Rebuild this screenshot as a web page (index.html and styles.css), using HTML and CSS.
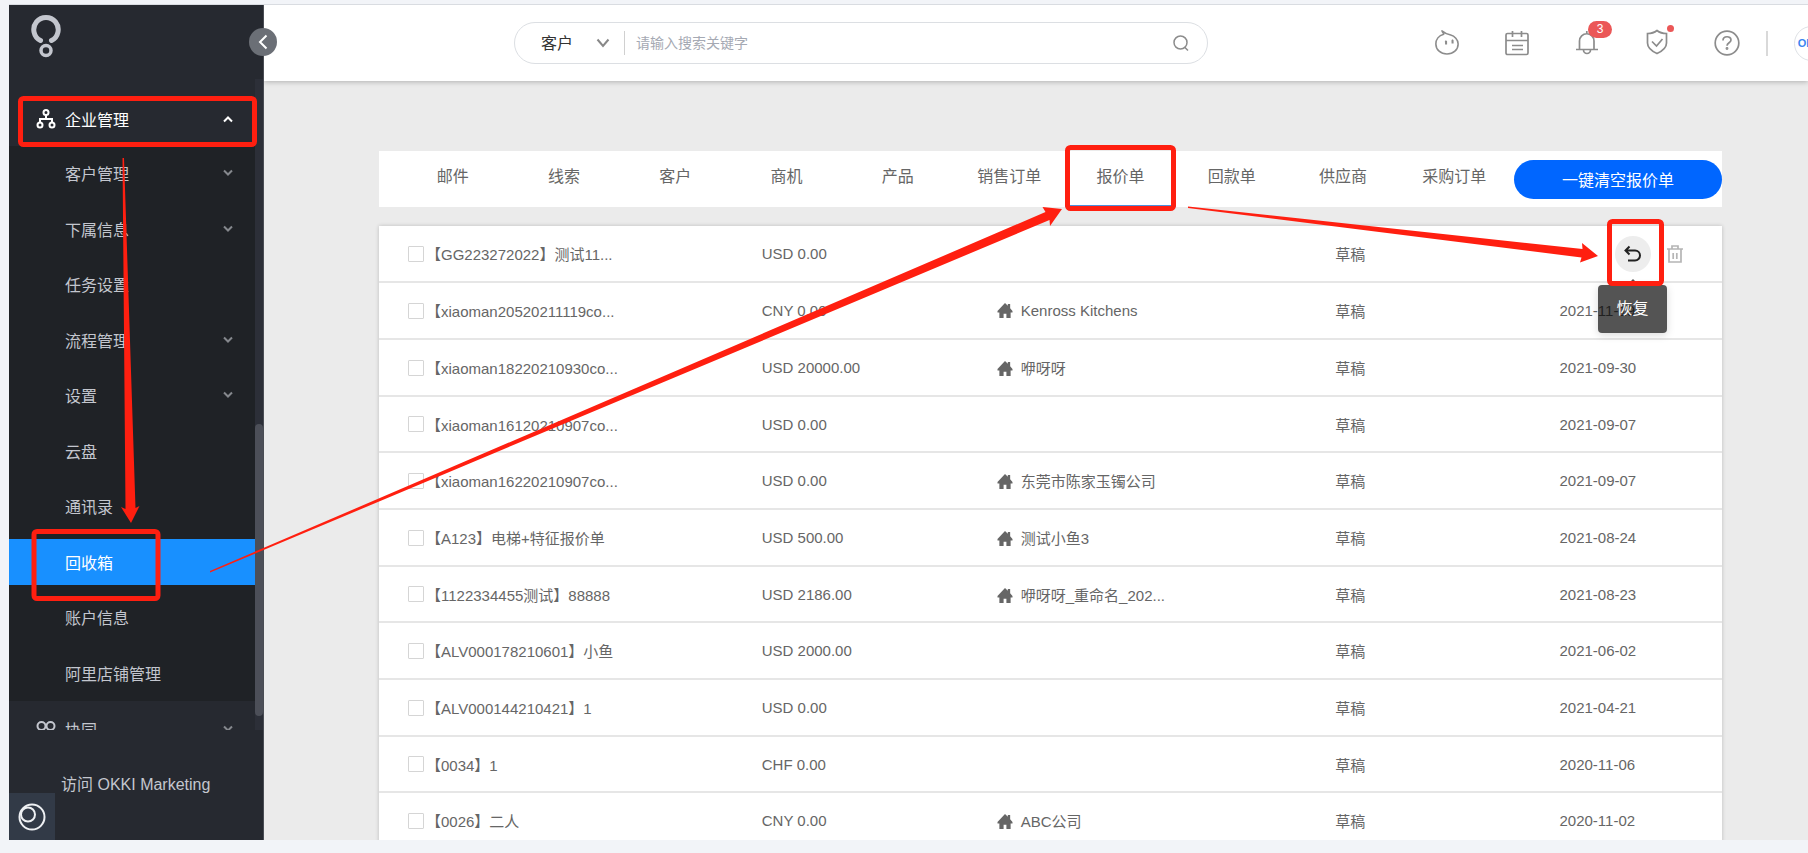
FILE: index.html
```html
<!DOCTYPE html>
<html lang="zh-CN">
<head>
  <meta charset="UTF-8">
  <title>回收箱 - 报价单</title>
  <meta name="viewport" content="width=device-width, initial-scale=1.0">
  <link rel="stylesheet" href="styles.css">
</head>
<body>
  <div class="app">
    <!-- SIDEBAR -->
    <aside class="sidebar">
      <div class="logo">
        <svg width="30" height="44" viewBox="0 0 30 44" fill="none" stroke="#c3c6ce">
          <path d="M9.5 26.5A12.2 12.2 0 1 1 20.500 26.500" stroke-width="5" stroke-linecap="round"/>
          <circle cx="15" cy="36.500" r="5" stroke-width="3.500"/>
        </svg>
      </div>
      <button class="collapse" aria-label="收起菜单">
        <svg width="10" height="16" viewBox="0 0 10 16" fill="none" stroke="#fff" stroke-width="2"><path d="M8.500 1.500 2 8l6.500 6.500"/></svg>
      </button>

      <div class="menu-wrap">
        <nav class="menu">
          <a class="menu-title open" href="#">
            <svg class="menu-icon" width="20" height="20" viewBox="0 0 20 20" fill="none" stroke="#fff" stroke-width="2">
              <circle cx="10" cy="3.500" r="2.500"/><circle cx="4" cy="16" r="2.500"/><circle cx="16" cy="16" r="2.500"/>
              <path d="M10 6v4M4 13.500V10h12v3.500"/>
            </svg>
            <span>企业管理</span>
            <svg class="arrow" width="10" height="8" viewBox="0 0 10 8" fill="none" stroke="#fff" stroke-width="2"><path d="M1 6.500l4-4 4 4"/></svg>
          </a>
          <ul class="submenu">
            <li><a href="#">客户管理<svg class="arrow" width="10" height="8" viewBox="0 0 10 8"><path d="M1 1.500l4 4 4-4"/></svg></a></li>
            <li><a href="#">下属信息<svg class="arrow" width="10" height="8" viewBox="0 0 10 8"><path d="M1 1.500l4 4 4-4"/></svg></a></li>
            <li><a href="#">任务设置</a></li>
            <li><a href="#">流程管理<svg class="arrow" width="10" height="8" viewBox="0 0 10 8"><path d="M1 1.500l4 4 4-4"/></svg></a></li>
            <li><a href="#">设置<svg class="arrow" width="10" height="8" viewBox="0 0 10 8"><path d="M1 1.500l4 4 4-4"/></svg></a></li>
            <li><a href="#">云盘</a></li>
            <li><a href="#">通讯录</a></li>
            <li><a class="active" href="#">回收箱</a></li>
            <li><a href="#">账户信息</a></li>
            <li><a href="#">阿里店铺管理</a></li>
          </ul>
          <a class="menu-title" href="#">
            <svg class="menu-icon" width="20" height="20" viewBox="0 0 20 20" fill="none" stroke="#c3c6ce" stroke-width="2">
              <circle cx="5.500" cy="7" r="4"/><circle cx="14.500" cy="7" r="4"/><path d="M5 11l5 6 5-6"/>
            </svg>
            <span>协同</span>
            <svg class="arrow" width="10" height="8" viewBox="0 0 10 8"><path d="M1 1.500l4 4 4-4"/></svg>
          </a>
        </nav>
        <div class="scrollbar"><div class="thumb"></div></div>
      </div>

      <div class="side-footer">
        <a class="marketing" href="#">访问 OKKI Marketing</a>
        <button class="corner" aria-label="助手">
          <svg width="28" height="28" viewBox="0 0 28 28" fill="none" stroke="#eef0f3" stroke-width="2">
            <circle cx="14" cy="14" r="12.500"/><circle cx="10" cy="11.500" r="7"/>
          </svg>
        </button>
      </div>
    </aside>

    <div class="page">
      <!-- HEADER -->
      <header class="header">
        <form class="search">
          <select class="search-type" aria-label="搜索类型"><option>客户</option></select>
          <svg class="search-arrow" width="14" height="10" viewBox="0 0 14 10" fill="none" stroke="#888" stroke-width="2"><path d="M1.500 1.500 7 8l5.500-6.500"/></svg>
          <input class="search-input" type="text" placeholder="请输入搜索关键字" aria-label="搜索关键字">
          <button class="search-btn" type="button" aria-label="搜索">
            <svg width="18" height="18" viewBox="0 0 18 18" fill="none" stroke="#8c8c8c" stroke-width="1.500"><circle cx="8.500" cy="8.500" r="6.500"/><path d="M12.500 13l3.500 3.500"/></svg>
          </button>
        </form>

        <div class="tools">
          <button class="tool" aria-label="客服">
            <svg width="28" height="30" viewBox="0 0 28 30" fill="none" stroke="#8c8c8c" stroke-width="1.700" stroke-linejoin="round">
              <path d="M10.500 5.500C5 7 2 11.500 2 16c0 6.500 5.300 10.800 12 10.800S26 22.500 26 16c0-4.500-4-8.500-8-9.500-4-1-6-1.500-9.500-4.500 1 1.500 1.800 2.500 2 3.500z"/>
              <path d="M12 13l1 .5v3M19 12l1 .5v3" stroke-width="2.200"/>
            </svg>
          </button>
          <button class="tool" aria-label="日程">
            <svg width="26" height="28" viewBox="0 0 26 28" fill="none" stroke="#8c8c8c" stroke-width="1.700">
              <rect x="2" y="4.500" width="22" height="21" rx="1.500"/><path d="M2 11.500h22M8.500 2v6M17.500 2v6M8 16.500h11M8 20.500h11"/>
            </svg>
          </button>
          <button class="tool" aria-label="通知">
            <svg width="26" height="28" viewBox="0 0 26 28" fill="none" stroke="#8c8c8c" stroke-width="1.700">
              <path d="M5.500 20.500V12a7.200 7.200 0 0 1 14.500 0v8.500M2 20.500h22M9.500 21a3.500 3.500 0 0 0 7 0M12.800 5V2"/>
            </svg>
            <span class="badge">3</span>
          </button>
          <button class="tool" aria-label="安全">
            <svg width="24" height="28" viewBox="0 0 24 28" fill="none" stroke="#8c8c8c" stroke-width="1.700">
              <path d="M12 1.500c2.500 2 6 3 9.500 3v9.500c0 5-4 8-9.500 10.500C6.500 22 2.500 19 2.500 14V4.500c3.500 0 7-1 9.500-3z"/><path d="M7 12.500l4.500 4.500 6-7"/>
            </svg>
            <span class="dot"></span>
          </button>
          <button class="tool" aria-label="帮助">
            <svg width="26" height="26" viewBox="0 0 26 26" fill="none" stroke="#8c8c8c" stroke-width="1.700">
              <circle cx="13" cy="13" r="11.800"/><path d="M9 10.500c0-5 8-4.800 8-.5 0 2.800-4 2.800-4 5.800"/><circle cx="13" cy="18.500" r=".6"/>
            </svg>
          </button>
          <span class="split"></span>
          <a class="avatar" href="#">OKKI</a>
        </div>
      </header>

      <!-- CONTENT -->
      <main class="content">
        <div class="tab-bar">
          <nav class="tabs">
            <a href="#">邮件</a>
            <a href="#">线索</a>
            <a href="#">客户</a>
            <a href="#">商机</a>
            <a href="#">产品</a>
            <a href="#">销售订单</a>
            <a class="current" href="#">报价单</a>
            <a href="#">回款单</a>
            <a href="#">供应商</a>
            <a href="#">采购订单</a>
          </nav>
          <button class="clear-btn">一键清空报价单</button>
        </div>

        <table class="list">
          <colgroup>
            <col class="col-name"><col class="col-amount"><col class="col-company"><col class="col-status"><col class="col-date">
          </colgroup>
          <tbody>
            <tr>
              <td><label><input type="checkbox">【GG223272022】测试11...</label></td>
              <td>USD 0.00</td>
              <td></td>
              <td>草稿</td>
              <td>
                <div class="actions">
                  <button class="restore" aria-label="恢复">
                    <svg width="20" height="18" viewBox="0 0 20 18" fill="none" stroke="#222" stroke-width="2"><path d="M6.500 1.500 2.500 5.500l4 4M2.500 5.500H12a5 5 0 0 1 0 10H5"/></svg>
                    <span class="tooltip">恢复</span>
                  </button>
                  <button class="trash" aria-label="删除">
                    <svg width="18" height="20" viewBox="0 0 18 20" fill="none" stroke="#b5b5b5" stroke-width="1.700"><path d="M1 5h16M6 5V2h6v3M3 5v13h12V5M7.200 9v6M10.800 9v6"/></svg>
                  </button>
                </div>
              </td>
            </tr>
            <tr>
              <td><label><input type="checkbox">【xiaoman20520211119co...</label></td>
              <td>CNY 0.00</td>
              <td><svg class="home" viewBox="0 0 16 16"><path d="M8 0l3 3V1h2.500v4.500L16 8.500V10h-2v6H9.500v-4.500h-3V16H2v-6H0V8.500z"/></svg>Kenross Kitchens</td>
              <td>草稿</td>
              <td>2021-11-19</td>
            </tr>
            <tr>
              <td><label><input type="checkbox">【xiaoman18220210930co...</label></td>
              <td>USD 20000.00</td>
              <td><svg class="home" viewBox="0 0 16 16"><path d="M8 0l3 3V1h2.500v4.500L16 8.500V10h-2v6H9.500v-4.500h-3V16H2v-6H0V8.500z"/></svg>咿呀呀</td>
              <td>草稿</td>
              <td>2021-09-30</td>
            </tr>
            <tr>
              <td><label><input type="checkbox">【xiaoman16120210907co...</label></td>
              <td>USD 0.00</td>
              <td></td>
              <td>草稿</td>
              <td>2021-09-07</td>
            </tr>
            <tr>
              <td><label><input type="checkbox">【xiaoman16220210907co...</label></td>
              <td>USD 0.00</td>
              <td><svg class="home" viewBox="0 0 16 16"><path d="M8 0l3 3V1h2.500v4.500L16 8.500V10h-2v6H9.500v-4.500h-3V16H2v-6H0V8.500z"/></svg>东莞市陈家玉镯公司</td>
              <td>草稿</td>
              <td>2021-09-07</td>
            </tr>
            <tr>
              <td><label><input type="checkbox">【A123】电梯+特征报价单</label></td>
              <td>USD 500.00</td>
              <td><svg class="home" viewBox="0 0 16 16"><path d="M8 0l3 3V1h2.500v4.500L16 8.500V10h-2v6H9.500v-4.500h-3V16H2v-6H0V8.500z"/></svg>测试小鱼3</td>
              <td>草稿</td>
              <td>2021-08-24</td>
            </tr>
            <tr>
              <td><label><input type="checkbox">【1122334455测试】88888</label></td>
              <td>USD 2186.00</td>
              <td><svg class="home" viewBox="0 0 16 16"><path d="M8 0l3 3V1h2.500v4.500L16 8.500V10h-2v6H9.500v-4.500h-3V16H2v-6H0V8.500z"/></svg>咿呀呀_重命名_202...</td>
              <td>草稿</td>
              <td>2021-08-23</td>
            </tr>
            <tr>
              <td><label><input type="checkbox">【ALV000178210601】小鱼</label></td>
              <td>USD 2000.00</td>
              <td></td>
              <td>草稿</td>
              <td>2021-06-02</td>
            </tr>
            <tr>
              <td><label><input type="checkbox">【ALV000144210421】1</label></td>
              <td>USD 0.00</td>
              <td></td>
              <td>草稿</td>
              <td>2021-04-21</td>
            </tr>
            <tr>
              <td><label><input type="checkbox">【0034】1</label></td>
              <td>CHF 0.00</td>
              <td></td>
              <td>草稿</td>
              <td>2020-11-06</td>
            </tr>
            <tr>
              <td><label><input type="checkbox">【0026】二人</label></td>
              <td>CNY 0.00</td>
              <td><svg class="home" viewBox="0 0 16 16"><path d="M8 0l3 3V1h2.500v4.500L16 8.500V10h-2v6H9.500v-4.500h-3V16H2v-6H0V8.500z"/></svg>ABC公司</td>
              <td>草稿</td>
              <td>2020-11-02</td>
            </tr>
          </tbody>
        </table>
      </main>
    </div>
  </div>

  <!-- GUIDE MARKS -->
  <svg class="guide" width="1808" height="853" viewBox="0 0 1808 853">
    <g fill="none" stroke="#ff1f10" stroke-width="5">
      <rect x="20.500" y="98.500" width="234" height="46" rx="3"/>
      <rect x="34" y="531.500" width="124" height="67" rx="3"/>
      <rect x="1067.500" y="147.500" width="106" height="61" rx="3"/>
      <rect x="1609.500" y="221.500" width="52" height="62" rx="3"/>
    </g>
    <g fill="#ff1f10">
      <path d="M122.500 158h1.500L135.500 508l4-2L131 523l-10-16 4.500 2z"/>
      <path d="M210 571L1045.500 212l-3-5 19.500 2-12 17-.5-6L210 572.500z"/>
      <path d="M1188 206.500L1582.500 249l-.5-6 16 13-18 6.500 1.500-5L1188 208z"/>
    </g>
  </svg>
</body>
</html>
```
FILE: styles.css
```css
* {
  margin: 0;
  padding: 0;
  box-sizing: border-box;
}

body {
  font-family: "Liberation Sans", "Noto Sans CJK SC", sans-serif;
  font-size: 16px;
  color: #666;
  background: #f2f4f8;
  height: 100vh;
  padding: 4px 0 13px 9px;
  overflow: hidden;
}

a {
  color: inherit;
  text-decoration: none;
}

button {
  font: inherit;
  border: none;
  background: none;
  cursor: pointer;
}

svg {
  display: block;
}

.app {
  display: flex;
  height: 100%;
  border-top: 1px solid #d9dce1;
}

/* SIDEBAR */
.sidebar {
  position: relative;
  z-index: 2;
  width: 255px;
  flex-shrink: 0;
  display: flex;
  flex-direction: column;
  background: #262930;
  border-right: 1px solid #4a4d54;
  color: #c3c6ce;
}

.logo {
  height: 74px;
  padding: 9px 22px;
}

.collapse {
  position: absolute;
  top: 23px;
  right: -14px;
  width: 28px;
  height: 28px;
  border-radius: 50%;
  background: #6b6f76;
  display: flex;
  align-items: center;
  justify-content: center;
}

.menu-wrap {
  flex: 1;
  min-height: 0;
  display: flex;
  overflow: hidden;
}

.menu {
  flex: 1;
}

.menu-title {
  display: flex;
  align-items: center;
  height: 56px;
  padding: 0 22px 0 27px;
}

.menu-title.open {
  height: 67px;
  padding-top: 12px;
  color: #fff;
}

.menu-icon {
  margin-right: 9px;
}

.arrow {
  margin-left: auto;
  fill: none;
  stroke: #85888d;
  stroke-width: 2;
}

.menu-title.open .arrow {
  stroke: #fff;
}

.submenu {
  list-style: none;
  background: #1f2226;
  padding: 4px 0 5px;
}

.submenu li {
  margin-bottom: 10px;
}

.submenu li:nth-child(even) {
  margin-bottom: 9px;
}

.submenu li:last-child {
  margin-bottom: 0;
}

.submenu a {
  display: flex;
  align-items: center;
  height: 46px;
  padding: 0 22px 0 56px;
}

.submenu a.active {
  background: #1890ff;
  color: #fff;
}

.scrollbar {
  width: 8px;
  background: #2c2f38;
  display: flex;
  flex-direction: column;
  justify-content: flex-end;
  padding-bottom: 14px;
}

.thumb {
  height: 292px;
  border-radius: 4px;
  background: #4c4f58;
}

.side-footer {
  height: 110px;
  display: flex;
  flex-direction: column;
  justify-content: space-between;
}

.marketing {
  padding: 43px 0 0 52px;
  line-height: 24px;
  height: 63px;
}

.corner {
  width: 46px;
  height: 47px;
  background: #323a47;
  display: flex;
  align-items: center;
  justify-content: center;
}

/* HEADER */
.page {
  flex: 1;
  min-width: 0;
  display: flex;
  flex-direction: column;
  background: #ebebeb;
  overflow: hidden;
}

.header {
  flex-shrink: 0;
  height: 76px;
  display: flex;
  align-items: center;
  justify-content: space-between;
  padding-left: 250px;
  background: #fff;
  box-shadow: 0 1px 5px rgba(0, 0, 0, 0.25);
}

.search {
  width: 694px;
  height: 42px;
  display: flex;
  align-items: center;
  border: 1px solid #dcdfe3;
  border-radius: 21px;
  padding: 0 17px 0 26px;
}

.search-type {
  appearance: none;
  width: 55px;
  border: none;
  background: none;
  font: inherit;
  color: #333;
}

.search-input {
  flex: 1;
  height: 24px;
  margin-left: 14px;
  padding-left: 11px;
  border: none;
  border-left: 1px solid #d0d0d0;
  outline: none;
  font: inherit;
  font-size: 14px;
}

.search-input::placeholder {
  color: #a5a9b3;
}

.tools {
  display: flex;
  align-items: center;
  gap: 26px;
  margin-right: -21px;
}

.tool {
  position: relative;
  width: 26px;
  height: 30px;
  margin-right: 18px;
  display: flex;
  align-items: center;
  justify-content: center;
}

.tool:nth-child(5) {
  margin-right: 0;
}

.badge {
  position: absolute;
  top: -7px;
  left: 14px;
  width: 24px;
  height: 17px;
  border-radius: 9px;
  background: #eb5757;
  color: #fff;
  font-size: 12px;
  line-height: 17px;
}

.dot {
  position: absolute;
  top: -3px;
  right: -4px;
  width: 7px;
  height: 7px;
  border-radius: 50%;
  background: #eb5757;
}

.split {
  width: 2px;
  height: 25px;
  background: #d9d9d9;
}

.avatar {
  width: 35px;
  height: 35px;
  border: 1px solid #dfe2e6;
  border-radius: 50%;
  color: #3b86f0;
  font-size: 11px;
  font-weight: bold;
  line-height: 33px;
  text-align: center;
}

/* CONTENT */
.content {
  flex: 1;
  min-height: 0;
  padding: 70px 86px 0 115px;
}

.tab-bar {
  display: flex;
  align-items: center;
  gap: 4px;
  height: 56px;
  margin-bottom: 19px;
  padding-left: 18px;
  background: #fff;
}

.tabs {
  flex: 1;
  display: flex;
}

.tabs a {
  flex: 1;
  height: 56px;
  line-height: 52px;
  text-align: center;
}

.tabs a.current {
  border-bottom: 2px solid #4c8fdc;
}

.clear-btn {
  width: 208px;
  height: 39px;
  border-radius: 20px;
  background: #0066ff;
  color: #fff;
}

.list {
  width: 100%;
  table-layout: fixed;
  border-collapse: collapse;
  background: #fff;
  box-shadow: 0 0 4px rgba(0, 0, 0, 0.2);
  font-size: 15px;
}

.col-name {
  width: 28.5%;
}

.col-amount {
  width: 17.5%;
}

.col-company {
  width: 25.2%;
}

.col-status {
  width: 16.7%;
}

.list tr {
  height: 57px;
}

.list tr:nth-child(3n + 1) {
  height: 56px;
}

.list td {
  border-bottom: 2px solid #e6e6e6;
  white-space: nowrap;
}

.list td:first-child {
  padding-left: 29px;
}

.list label {
  display: flex;
  align-items: center;
  gap: 2px;
}

.list input {
  appearance: none;
  width: 16px;
  height: 16px;
  border: 1px solid #d5d5d5;
  border-radius: 1px;
  background: #fff;
}

.home {
  display: inline-block;
  width: 16px;
  height: 15px;
  margin-right: 8px;
  vertical-align: -2px;
  fill: #666;
}

.actions {
  display: flex;
  align-items: center;
  justify-content: flex-end;
  gap: 15px;
  padding-right: 38px;
}

.restore {
  position: relative;
  width: 36px;
  height: 36px;
  border-radius: 50%;
  background: #ededed;
  display: flex;
  align-items: center;
  justify-content: center;
}

.tooltip {
  position: absolute;
  top: 49px;
  left: -17px;
  width: 69px;
  height: 48px;
  border-radius: 4px;
  background: rgba(0, 0, 0, 0.67);
  box-shadow: 0 2px 8px rgba(0, 0, 0, 0.15);
  color: #fff;
  font-size: 16px;
  line-height: 48px;
}

.tooltip::before {
  content: "";
  position: absolute;
  top: -6px;
  left: 29px;
  border: 6px solid transparent;
  border-top: none;
  border-bottom-color: #555;
}

/* GUIDE MARKS */
.guide {
  position: absolute;
  top: 0;
  left: 0;
  pointer-events: none;
  z-index: 5;
}
```
